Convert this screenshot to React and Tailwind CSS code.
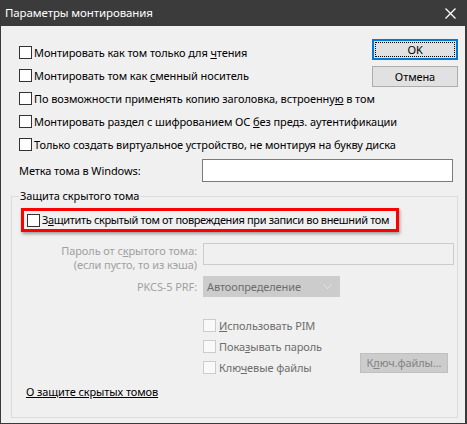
import React from 'react';

const font = { fontFamily: '"Noto Sans", "Liberation Sans", sans-serif' };

// Windows-style check box
const Box = ({ disabled }) => (
  <span
    className={
      disabled
        ? 'inline-block w-[13px] h-[13px] shrink-0 border border-[#cccccc] bg-[#f9f9f9]'
        : 'inline-block w-[13px] h-[13px] shrink-0 border border-[#333333] bg-white'
    }
  />
);

const CheckRow = ({ children }) => (
  <div className="flex items-center h-[23px]">
    <Box />
    <span className="ml-[2px] text-black whitespace-nowrap">{children}</span>
  </div>
);

const DisabledCheck = ({ children, className = '' }) => (
  <div className={'flex items-center h-[21px] ' + className}>
    <Box disabled />
    <span className="ml-[3px] text-[#6d6d6d] whitespace-nowrap">{children}</span>
  </div>
);

const App = () => {
  return (
    <div
      className="w-[467px] h-[424px] flex flex-col bg-[#f0f0f0] border-l border-r-2 border-b border-[#3a3a3a] text-[11px] tracking-[-0.1px] leading-[14px] overflow-hidden"
      style={font}
    >
      {/* Title bar */}
      <div className="h-[26px] shrink-0 bg-[#3b3b3b] flex items-center justify-between pl-[4px] pr-[9px]">
        <span className="text-white text-[11.5px]">Параметры монтирования</span>
        <svg width="11" height="11" viewBox="0 0 11 11">
          <path d="M0.5 0.5 L10.5 10.5 M10.5 0.5 L0.5 10.5" stroke="#ffffff" strokeWidth="1.3" />
        </svg>
      </div>

      {/* Options + buttons */}
      <div className="flex pt-[15px] pl-[18px] pr-[7px]">
        <div className="flex-1">
          <CheckRow>
            Монтировать как том только для <u>ч</u>тения
          </CheckRow>
          <CheckRow>
            Монтировать том как <u>с</u>менный носитель
          </CheckRow>
          <CheckRow>
            По возможности применять копию заголовка, встроенну<u>ю</u> в том
          </CheckRow>
          <CheckRow>
            Монтировать раздел с шифрованием ОС <u>б</u>ез предз. аутентификации
          </CheckRow>
          <CheckRow>Только создать виртуальное устройство, не монтируя на букву диска</CheckRow>
        </div>
        <div className="flex flex-col gap-[6px] -ml-[80px] mt-[-2px]">
          <div className="w-[86px] h-[21px] border-2 border-[#0078d7] bg-[#e1e1e1] p-[1px]">
            <div className="w-full h-full border border-dotted border-black flex items-center justify-center text-black">
              OK
            </div>
          </div>
          <div className="w-[86px] h-[21px] border border-[#adadad] bg-[#e1e1e1] flex items-center justify-center text-black">
            Отмена
          </div>
        </div>
      </div>

      {/* Volume label */}
      <div className="flex items-center pl-[18px] mt-[3px]">
        <span className="w-[183px] text-black">Метка тома в Windows:</span>
        <div className="w-[251px] h-[23px] border border-[#7a7a7a] bg-white" />
      </div>

      {/* Hidden volume protection */}
      <fieldset className="ml-[10px] mr-[7px] mt-[7px] border border-[#dcdcdc] pb-[18px]">
        <legend className="ml-[7px] px-[1px] text-black">Защита скрытого тома</legend>

        <div className="ml-[9px] mt-[5px] w-[378px] h-[24px] border-[3px] border-[#ff0000] shadow-[1px_2px_3px_rgba(0,0,0,0.35)] flex items-center pl-[3px]">
          <Box />
          <span className="ml-[2px] text-black whitespace-nowrap tracking-[-0.35px]">
            З<u>а</u>щитить скрытый том от повреждения при записи во внешний том
          </span>
        </div>

        <div className="flex mt-[11px]">
          <div className="w-[185px] text-right text-[#a0a0a0] leading-[14px] pt-[1px]">
            <div>
              Пароль от с<u>к</u>рытого тома:
            </div>
            <div>(если пусто, то из кэша)</div>
          </div>
          <div className="ml-[6px] w-[251px] h-[22px] border border-[#cccccc] bg-[#f0f0f0]" />
        </div>

        <div className="flex items-center mt-[4px]">
          <div className="w-[185px] text-right text-[#a0a0a0]">PKCS-5 PRF:</div>
          <div className="ml-[6px] w-[137px] h-[21px] bg-[#cccccc] flex items-center justify-between pl-[4px] pr-[8px] text-[#6d6d6d]">
            <span>Автоопределение</span>
            <svg width="9" height="5" viewBox="0 0 9 5">
              <path d="M0.5 0.5 L4.5 4.5 L8.5 0.5" fill="none" stroke="#e6e6e6" strokeWidth="1" />
            </svg>
          </div>
        </div>

        <div className="ml-[191px] mt-[18px] mr-[9px]">
          <DisabledCheck>
            <u>И</u>спользовать PIM
          </DisabledCheck>
          <DisabledCheck>
            Пока<u>з</u>ывать пароль
          </DisabledCheck>
          <div className="flex items-center justify-between">
            <DisabledCheck>
              Клю<u>ч</u>евые файлы
            </DisabledCheck>
            <div className="w-[88px] h-[20px] -mt-[10px] border border-[#bfbfbf] bg-[#cccccc] flex items-center justify-center text-[#838383]">
              К<u>л</u>юч.файлы...
            </div>
          </div>
        </div>

        <div className="ml-[14px] mt-[7px] text-black underline">О защите скрытых томов</div>
      </fieldset>
    </div>
  );
};

export default App;
